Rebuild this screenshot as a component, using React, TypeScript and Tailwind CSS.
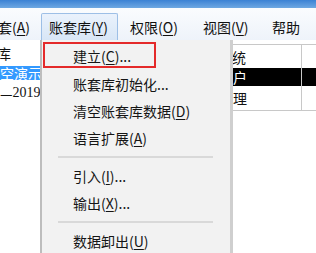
import React from "react";

type MenuEntry = { label: string; key?: string; tail?: string } | "sep";

const entries: MenuEntry[] = [
	{ label: "建立", key: "C", tail: "..." },
	{ label: "账套库初始化..." },
	{ label: "清空账套库数据", key: "D" },
	{ label: "语言扩展", key: "A" },
	"sep",
	{ label: "引入", key: "I", tail: "..." },
	{ label: "输出", key: "X", tail: "..." },
	"sep",
	{ label: "数据卸出", key: "U" },
];

const Access = ({ k }: { k: string }) => (
	<span>
		(<span className="underline underline-offset-2">{k}</span>)
	</span>
);

const TopItem = ({ label, k }: { label: string; k?: string }) => (
	<span className="whitespace-nowrap">
		{label}
		{k && <Access k={k} />}
	</span>
);

export default function App() {
	return (
		<div
			className="relative w-[316px] h-[253px] overflow-hidden bg-white text-[14px] text-[#111]"
			style={{ fontFamily: '"Noto Sans CJK SC", "Noto Sans", sans-serif' }}
		>
			{/* window caption strip */}
			<div className="h-[8px] bg-gradient-to-b from-[#3b82d4] to-[#6ea8e2]" />

			{/* menu bar */}
			<div className="h-[32px] flex items-end bg-gradient-to-b from-[#fafcfe] to-[#eef3fa] leading-none">
				<div className="w-[41px] h-[27px] flex items-center">
					<span className="-ml-[2px]">
						<TopItem label="套" k="A" />
					</span>
				</div>
				<div className="w-[77px] h-[27px] flex items-center pl-[7px] border border-b-0 border-[#9dbfe6] rounded-t-[2px] bg-gradient-to-b from-[#eaf2fc] to-[#d8e6f6]">
					<TopItem label="账套库" k="Y" />
				</div>
				<div className="w-[12px]" />
				<div className="w-[73px] h-[27px] flex items-center">
					<TopItem label="权限" k="O" />
				</div>
				<div className="w-[69px] h-[27px] flex items-center">
					<TopItem label="视图" k="V" />
				</div>
				<div className="h-[27px] flex items-center">
					<TopItem label="帮助" />
				</div>
			</div>

			{/* content area */}
			<div className="flex leading-none">
				<div className="w-[60px] pt-[3px] flex flex-col">
					<div className="h-[20px] flex items-center -ml-[3px]">库</div>
					<div className="h-[20px] flex items-center">
						<span className="bg-[#3399ff] text-white h-[14px] flex items-center whitespace-nowrap">空演示账套</span>
					</div>
					<div className="h-[20px] flex items-center whitespace-nowrap">
						—<span style={{ fontFamily: '"Liberation Serif", serif' }}>2019</span>
					</div>
				</div>
				<div className="w-[156px]" />
				<div className="flex-1 pt-[4px]">
					<div className="border-t border-b border-[#c8c8c8] flex">
						<div className="w-[86px] border-r border-[#c8c8c8] flex flex-col">
							<div className="h-[23px] flex items-center pl-[2px]">系统</div>
							<div className="h-[18px] flex items-center pl-[3px] bg-black text-white">账户</div>
							<div className="h-[24px] flex items-center pl-[3px]">管理</div>
						</div>
						<div className="flex-1 flex flex-col">
							<div className="h-[23px]" />
							<div className="h-[18px] bg-black" />
							<div className="h-[24px]" />
						</div>
					</div>
				</div>
			</div>

			{/* dropdown menu */}
			<div className="absolute left-[40px] top-[40px] w-[193px] h-[220px] bg-[#f2f2f2] border-l-2 border-[#bdbdbd] border-r-[3px] border-r-[#cfcfcf] pt-[2px] leading-none text-[#151515]">
				{entries.map((e, i) =>
					e === "sep" ? (
						<div key={i} className="h-[11px] flex items-center pl-[16px] pr-[17px]">
							<div className="h-[2px] w-full bg-[#d9d9d9]" />
						</div>
					) : (
						<div key={i} className={`${i === 0 ? "h-[28px]" : "h-[27px]"} flex items-center pl-[31px] whitespace-nowrap`}>
							{e.label}
							{e.key && <Access k={e.key} />}
							{e.tail}
						</div>
					),
				)}
			</div>

			{/* red annotation box */}
			<div className="absolute left-[43px] top-[42px] w-[113px] h-[26px] border-2 border-[#e42a2a]" />
		</div>
	);
}
